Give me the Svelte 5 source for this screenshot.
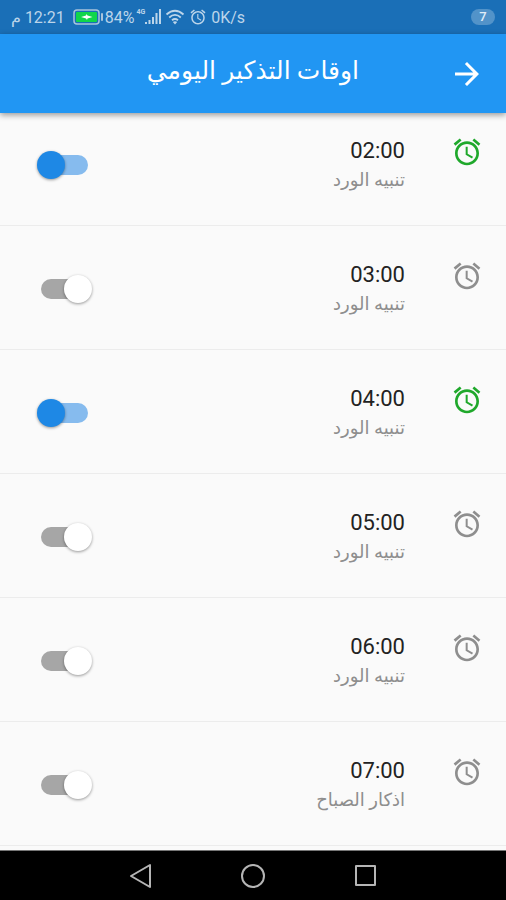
<script lang="ts">
	interface Reminder {
		time: string;
		label: string;
		enabled: boolean;
	}

	let reminders = $state<Reminder[]>([
		{ time: "02:00", label: "تنبيه الورد", enabled: true },
		{ time: "03:00", label: "تنبيه الورد", enabled: false },
		{ time: "04:00", label: "تنبيه الورد", enabled: true },
		{ time: "05:00", label: "تنبيه الورد", enabled: false },
		{ time: "06:00", label: "تنبيه الورد", enabled: false },
		{ time: "07:00", label: "اذكار الصباح", enabled: false }
	]);
</script>

{#snippet alarmIcon()}
	<svg class="alarm" viewBox="0 0 24 24" aria-hidden="true">
		<path
			d="M22 5.72l-4.6-3.86-1.29 1.53 4.6 3.86L22 5.72zM7.88 3.39L6.6 1.86 2 5.71l1.29 1.53 4.59-3.85zM12.5 8H11v6l4.75 2.85.75-1.23-4-2.37V8zM12 4c-4.97 0-9 4.03-9 9s4.02 9 9 9c4.97 0 9-4.03 9-9s-4.03-9-9-9zm0 16c-3.87 0-7-3.13-7-7s3.13-7 7-7 7 3.13 7 7-3.13 7-7 7z"
		/>
	</svg>
{/snippet}

<div class="screen">
	<div class="status-bar">
		<span class="clock" dir="rtl">12:21 م</span>
		<svg class="battery" viewBox="0 0 30 18" aria-hidden="true">
			<rect x="1" y="2" width="25" height="14" rx="3" fill="none" stroke="#a9c4dc" stroke-width="1.5" />
			<rect x="3" y="4" width="21" height="10" rx="1" fill="#10d64a" />
			<path d="M8 9l5-1.500 .5-1.500 1 1.500 5 1.500-5 1.500-.5 1.500-1-1.500z" fill="#fff" />
			<rect x="28" y="5" width="2" height="8" rx="1" fill="#a9c4dc" />
		</svg>
		<span>84%</span>
		<span class="network">4G</span>
		<svg class="signal" viewBox="0 0 16 18" aria-hidden="true">
			<path
				d="M0 14h2v2H0zM3.500 12h2v4h-2zM7 9h2v7H7zM10.500 5h2v11h-2zM14 1h2v15h-2z"
				fill="currentColor"
			/>
		</svg>
		<svg class="wifi" viewBox="0 0 20 18" aria-hidden="true">
			<g fill="none" stroke="currentColor" stroke-width="1.800">
				<path d="M1.500 6.500Q10-1 18.500 6.500" />
				<path d="M4.200 9.500Q10 4.300 15.800 9.500" />
				<path d="M7 12.300Q10 9.800 13 12.300" />
			</g>
			<path d="M7.800 14Q10 12.500 12.200 14L10 16.500z" fill="currentColor" />
		</svg>
		{@render alarmIcon()}
		<span>0K/s</span>
		<span class="badge">7</span>
	</div>

	<header dir="rtl">
		<button type="button" class="back-button" aria-label="رجوع">
			<svg viewBox="0 0 24 24" aria-hidden="true">
				<path d="M12 4l-1.410 1.410L16.170 11H4v2h12.170l-5.580 5.590L12 20l8-8z" />
			</svg>
		</button>
		<h1>اوقات التذكير اليومي</h1>
	</header>

	<main dir="rtl">
		<ul>
			{#each reminders as reminder, i}
				<li class:enabled={reminder.enabled}>
					{@render alarmIcon()}
					<label for="reminder-{i}">
						<span class="time">{reminder.time}</span>
						<span class="name">{reminder.label}</span>
					</label>
					<input
						type="checkbox"
						role="switch"
						id="reminder-{i}"
						bind:checked={reminder.enabled}
					/>
				</li>
			{/each}
		</ul>
	</main>

	<nav>
		<button type="button" aria-label="Back">
			<svg viewBox="0 0 28 28" aria-hidden="true"><path d="M4 14L23 3v22z" /></svg>
		</button>
		<button type="button" aria-label="Home">
			<svg viewBox="0 0 28 28" aria-hidden="true"><circle cx="14" cy="14" r="11" /></svg>
		</button>
		<button type="button" aria-label="Recent apps">
			<svg viewBox="0 0 28 28" aria-hidden="true">
				<rect x="5" y="4" width="19" height="19" />
			</svg>
		</button>
	</nav>
</div>

<style>
	:global(body) {
		margin: 0;
		background: #fafafa;
	}

	.screen {
		display: flex;
		flex-direction: column;
		min-height: 100vh;
		font-family: Roboto, "DejaVu Sans", sans-serif;
		background: #fafafa;
	}

	.status-bar {
		display: flex;
		align-items: center;
		gap: 2px;
		height: 34px;
		padding: 0 11px;
		font-size: 16px;
		color: #bcd5ea;
		background: #1a6fb7;
	}

	.status-bar svg {
		height: 18px;
	}

	.clock {
		margin-right: 6px;
	}

	.network {
		align-self: flex-start;
		margin-top: 8px;
		font-size: 7px;
		font-weight: 700;
		line-height: 8px;
	}

	.signal {
		margin-left: -2px;
	}

	.wifi {
		margin: 0 2px;
	}

	.status-bar .alarm {
		margin-right: 2px;
	}

	.badge {
		margin-left: auto;
		width: 24px;
		border-radius: 8px;
		font-size: 13px;
		font-weight: 500;
		line-height: 16px;
		text-align: center;
		color: #e0edf8;
		background: #5293c9;
	}

	.alarm {
		fill: currentColor;
	}

	header {
		position: relative;
		display: flex;
		align-items: center;
		gap: 90px;
		height: 79px;
		padding: 0 21px;
		color: #fff;
		background: #2196f3;
		box-shadow: 0 2px 6px rgba(0, 0, 0, 0.4);
	}

	.back-button {
		display: flex;
		padding: 0;
		border: none;
		color: inherit;
		background: none;
		cursor: pointer;
	}

	.back-button svg {
		width: 36px;
		height: 36px;
		fill: currentColor;
	}

	h1 {
		margin: 0;
		padding-bottom: 6px;
		font-size: 25px;
		font-weight: 400;
		line-height: 32px;
	}

	main {
		flex: 1;
	}

	ul {
		margin: 0;
		padding: 0;
		list-style: none;
	}

	li {
		display: flex;
		align-items: flex-start;
		gap: 46px;
		padding: 34px 23px 31px 37px;
		border-bottom: 1px solid #ececec;
		color: #8e8e8e;
	}

	li:first-child {
		padding-top: 23px;
	}

	li .alarm {
		width: 32px;
		height: 32px;
	}

	li.enabled .alarm {
		color: #1fa82b;
	}

	label {
		display: flex;
		flex: 1;
		flex-direction: column;
		cursor: pointer;
	}

	.time {
		font-size: 22px;
		line-height: 30px;
		color: #222;
	}

	.name {
		font-size: 18px;
		line-height: 28px;
	}

	input {
		display: flex;
		align-items: center;
		align-self: center;
		appearance: none;
		width: 56px;
		height: 28px;
		margin: 0;
		cursor: pointer;
	}

	input::before {
		content: "";
		width: 47px;
		height: 20px;
		margin: 0 5px;
		border-radius: 10px;
		background: #a6a6a6;
	}

	input::after {
		content: "";
		flex: none;
		width: 28px;
		height: 28px;
		margin-right: -56px;
		border-radius: 50%;
		background: #fff;
		box-shadow: 0 1px 3px rgba(0, 0, 0, 0.4);
	}

	input:checked::before {
		background: #86bbee;
	}

	input:checked::after {
		margin-right: -28px;
		background: #1e88e5;
	}

	nav {
		display: flex;
		align-items: center;
		justify-content: center;
		gap: 84px;
		height: 49px;
		border-top: 1px solid #777;
		background: #000;
	}

	nav button {
		display: flex;
		padding: 0;
		border: none;
		background: none;
		cursor: pointer;
	}

	nav svg {
		width: 28px;
		height: 28px;
		fill: none;
		stroke: #b5b5b5;
		stroke-width: 2;
		stroke-linejoin: round;
	}
</style>
